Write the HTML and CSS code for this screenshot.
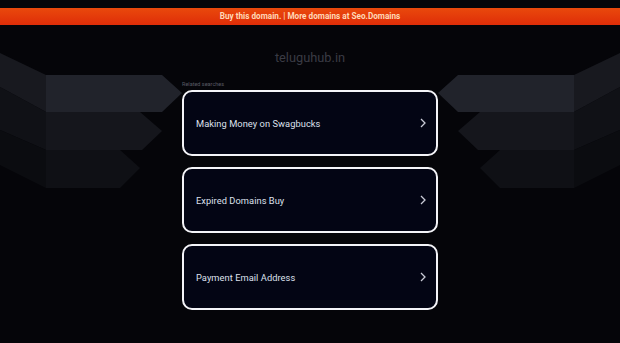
FILE: index.html
```html
<!DOCTYPE html>
<html lang="en">
<head>
    <meta charset="UTF-8">
    <meta name="viewport" content="width=device-width, initial-scale=1.0">
    <title>teluguhub.in</title>
    <link rel="stylesheet" href="styles.css">
</head>
<body>
    <!-- decorative arrows behind the content -->
    <svg class="backdrop" width="620" height="343" viewBox="0 0 620 343" aria-hidden="true">
        <g>
            <polygon fill="#18191f" points="0,53 46,75 46,112 0,87"/>
            <polygon fill="#101116" points="0,87 46,112 46,150 0,130"/>
            <polygon fill="#0b0c10" points="0,130 46,150 46,188 0,165"/>
            <polygon fill="#21232b" points="46,75 162,75 182,93 162,112 46,112"/>
            <polygon fill="#15161c" points="46,112 140,112 162,131 142,150 46,150"/>
            <polygon fill="#0f1015" points="46,150 120,150 140,168 120,188 46,188"/>
        </g>
        <g transform="translate(620,0) scale(-1,1)">
            <polygon fill="#18191f" points="0,53 46,75 46,112 0,87"/>
            <polygon fill="#101116" points="0,87 46,112 46,150 0,130"/>
            <polygon fill="#0b0c10" points="0,130 46,150 46,188 0,165"/>
            <polygon fill="#21232b" points="46,75 162,75 182,93 162,112 46,112"/>
            <polygon fill="#15161c" points="46,112 140,112 162,131 142,150 46,150"/>
            <polygon fill="#0f1015" points="46,150 120,150 140,168 120,188 46,188"/>
        </g>
    </svg>

    <div class="banner">Buy this domain. | More domains at Seo.Domains</div>

    <div class="main">
        <div class="domain">teluguhub.in</div>

        <div class="related">
            <div class="related-title">Related searches</div>
            <a class="card" href="#">
                <span>Making Money on Swagbucks</span>
                <svg class="chevron" width="6" height="10" viewBox="0 0 6 10"><path d="M1 1l4 4-4 4"/></svg>
            </a>
            <a class="card" href="#">
                <span>Expired Domains Buy</span>
                <svg class="chevron" width="6" height="10" viewBox="0 0 6 10"><path d="M1 1l4 4-4 4"/></svg>
            </a>
            <a class="card" href="#">
                <span>Payment Email Address</span>
                <svg class="chevron" width="6" height="10" viewBox="0 0 6 10"><path d="M1 1l4 4-4 4"/></svg>
            </a>
        </div>
    </div>
</body>
</html>
```

FILE: styles.css
```css
body { margin: 0; padding-top: 8px; background: #050509; font-family: Roboto, "Liberation Sans", Arial, sans-serif; min-height: 335px; overflow: hidden; }
.backdrop { position: absolute; top: 0; left: 0; z-index: 0; }
.banner { position: relative; height: 17px; line-height: 17px; text-align: center; font-size: 8.2px; font-weight: bold; color: #ffd9b8; background: linear-gradient(#e9490c, #df2d08); }
.main { position: relative; z-index: 1; display: flex; flex-direction: column; align-items: center; }
.domain { margin-top: 24px; height: 18px; line-height: 18px; font-size: 12.8px; color: #3a3b44; }
.related { width: 256px; margin-top: 13px; display: flex; flex-direction: column; gap: 11px; }
.related-title { font-size: 5.5px; color: #5a5b64; margin-bottom: -9px; height: 8px; line-height: 8px; }
.card { display: flex; align-items: center; justify-content: space-between; height: 62px; padding: 0 10px 0 12px; border: 2px solid #f4f4f8; border-radius: 10px; background: #030514; color: #dde0ec; font-size: 9.3px; font-weight: 400; letter-spacing: 0.05px; text-decoration: none; }
.chevron { fill: none; stroke: #c9cbd6; stroke-width: 1.3; }
```
